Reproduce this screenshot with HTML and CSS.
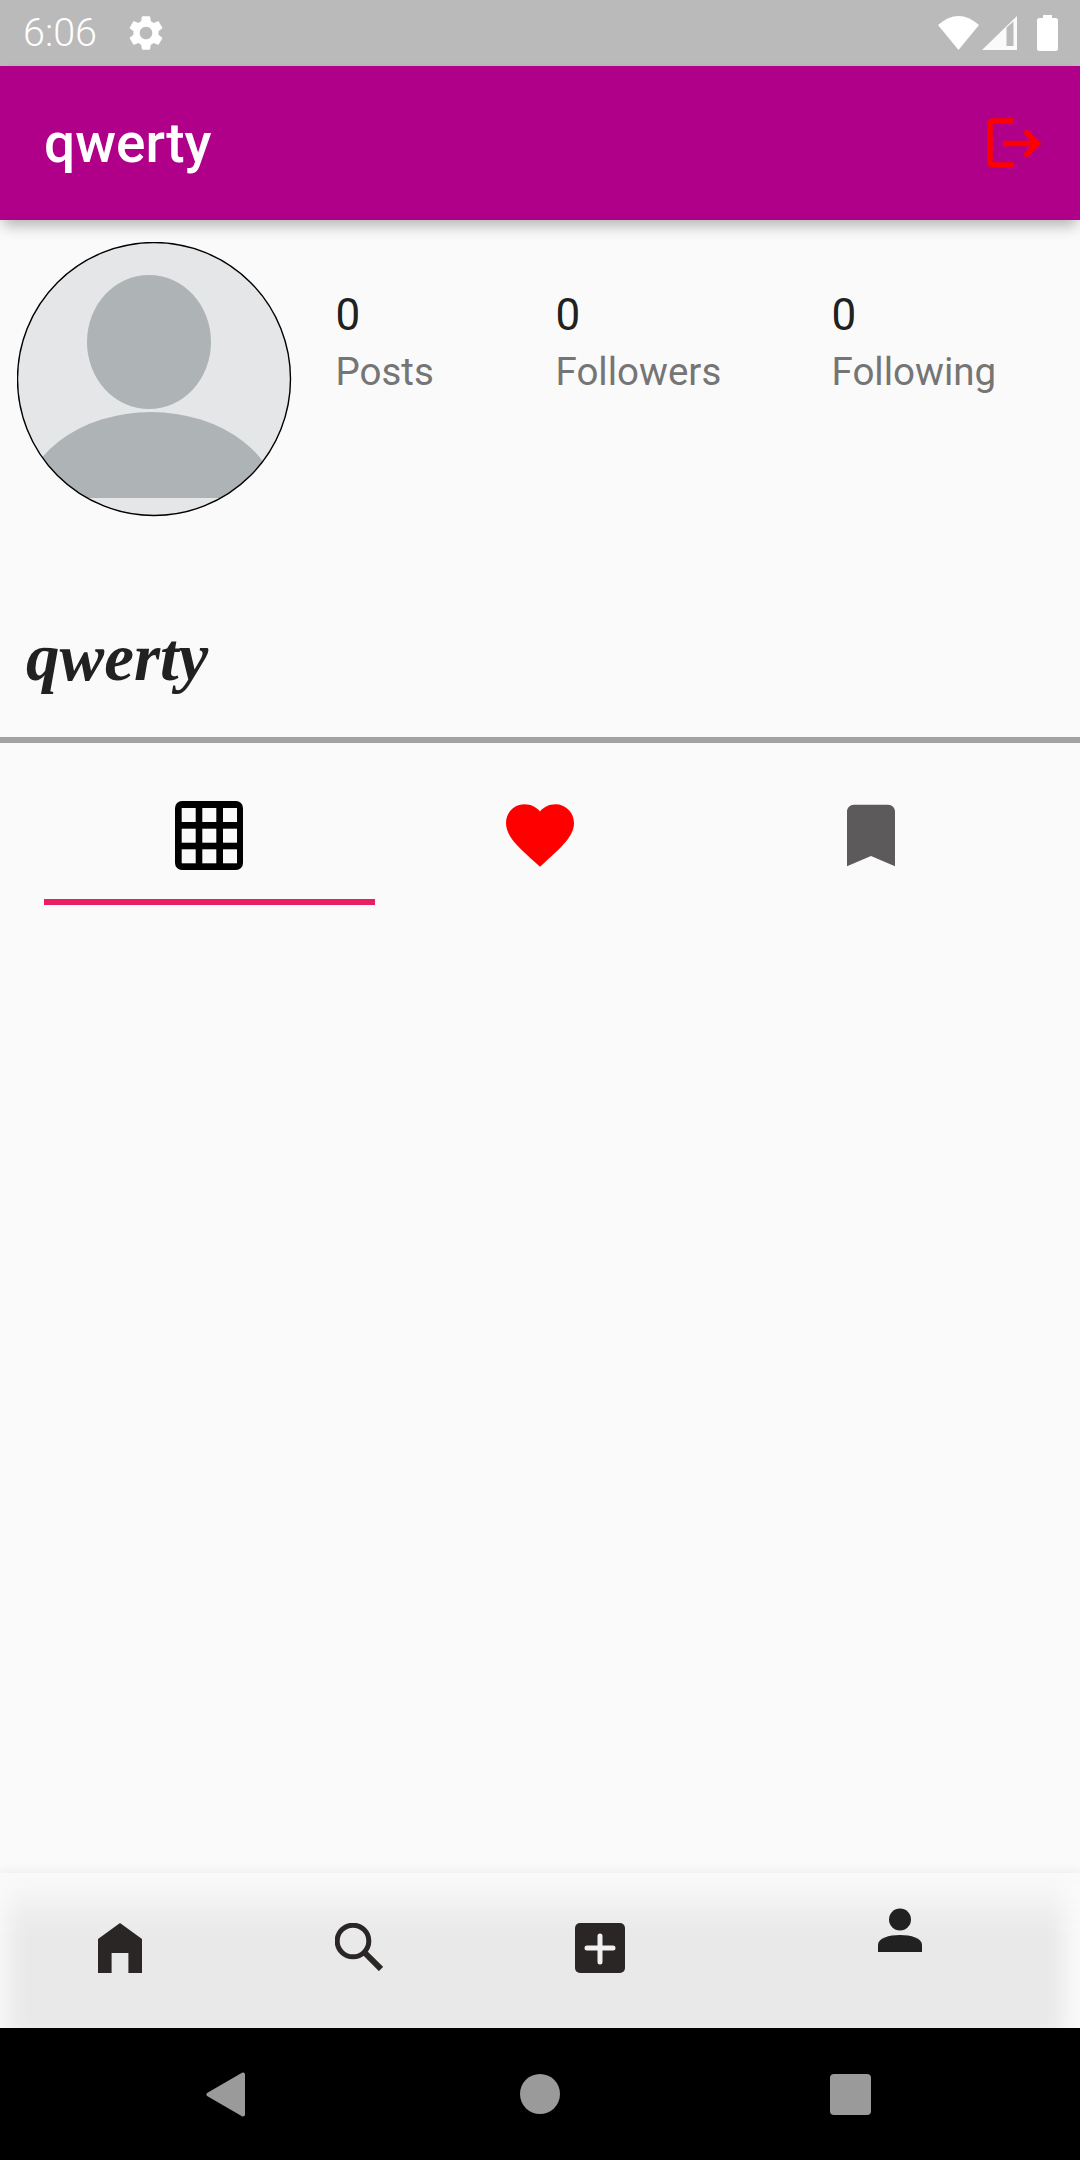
FILE: index.html
```html
<!DOCTYPE html>
<html lang="en">
<head>
<meta charset="utf-8">
<title>qwerty</title>
<link rel="stylesheet" href="styles.css">
</head>
<body>
<div class="phone">
  <header class="status">
    <div class="status-left">
      <span class="time">6:06</span>
      <svg class="gear" width="42" height="42" viewBox="0 0 24 24"><path fill="#fff" d="M19.14 12.94c.04-.3.06-.61.06-.94 0-.32-.02-.64-.07-.94l2.03-1.58c.18-.14.23-.41.12-.61l-1.92-3.32c-.12-.22-.37-.29-.59-.22l-2.39.96c-.5-.38-1.03-.7-1.62-.94l-.36-2.54c-.04-.24-.24-.41-.48-.41h-3.84c-.24 0-.43.17-.47.41l-.36 2.54c-.59.24-1.13.57-1.62.94l-2.39-.96c-.22-.08-.47 0-.59.22L2.74 8.87c-.12.21-.08.47.12.61l2.03 1.58c-.05.3-.09.63-.09.94s.02.64.07.94l-2.03 1.58c-.18.14-.23.41-.12.61l1.92 3.32c.12.22.37.29.59.22l2.39-.96c.5.38 1.03.7 1.62.94l.36 2.54c.05.24.24.41.48.41h3.84c.24 0 .44-.17.47-.41l.36-2.54c.59-.24 1.13-.56 1.62-.94l2.39.96c.22.08.47 0 .59-.22l1.92-3.32c.12-.22.07-.47-.12-.61l-2.01-1.58zM12 15.6c-1.98 0-3.6-1.62-3.6-3.6s1.62-3.6 3.6-3.6 3.6 1.62 3.6 3.6-1.62 3.6-3.6 3.6z"/></svg>
    </div>
    <div class="status-right">
      <svg class="wifi" width="41" height="34" viewBox="0 0 41 34"><path fill="#fff" d="M20.5 34 0 9Q20.5-9 41 9Z"/></svg>
      <svg class="signal" width="35" height="34" viewBox="0 0 35 34"><path fill="#fff" fill-rule="evenodd" opacity=".92" d="M0 34 35 0V34ZM24.500 30H31.500V5.500L24.500 11.500Z"/></svg>
      <svg class="battery" width="21" height="36" viewBox="0 0 21 36"><path fill="#fff" d="M6 0H15V3H18.500A2.500 2.500 0 0 1 21 5.500V33.500A2.500 2.500 0 0 1 18.500 36H2.500A2.500 2.500 0 0 1 0 33.500V5.500A2.500 2.500 0 0 1 2.500 3H6Z"/></svg>
    </div>
  </header>

  <div class="appbar">
    <h1 class="appbar-title">qwerty</h1>
    <svg class="logout" width="56" height="52" viewBox="0 0 56 52"><path fill="none" stroke="#f00" stroke-width="5.500" d="M27 3H6Q3 3 3 6V44Q3 47 6 47H27"/><path fill="none" stroke="#f00" stroke-width="5.500" d="M16 25.500H50M38 13 50.500 25.500 38 38"/></svg>
  </div>

  <main class="content">
    <section class="profile">
      <svg class="avatar" width="276" height="276" viewBox="0 0 276 276">
        <defs>
          <clipPath id="disc"><circle cx="137" cy="137" r="137"/></clipPath>
          <clipPath id="cut"><rect x="0" y="0" width="276" height="256"/></clipPath>
        </defs>
        <circle cx="137" cy="137" r="137" fill="#e4e6e8"/>
        <ellipse cx="132" cy="100" rx="62" ry="67" fill="#aeb3b6"/>
        <g clip-path="url(#disc)"><ellipse clip-path="url(#cut)" cx="134" cy="270" rx="130" ry="100" fill="#aeb3b6"/></g>
        <circle cx="137" cy="137" r="136.500" fill="none" stroke="#000" stroke-width="1.400"/>
      </svg>
      <div class="stats">
        <div class="stat"><span class="stat-num">0</span><span class="stat-label">Posts</span></div>
        <div class="stat"><span class="stat-num">0</span><span class="stat-label">Followers</span></div>
        <div class="stat"><span class="stat-num">0</span><span class="stat-label">Following</span></div>
      </div>
    </section>

    <h2 class="name">qwerty</h2>

    <div class="tabs">
      <div class="tab tab-active">
        <svg width="68" height="69" viewBox="0 0 68 69"><rect width="68" height="69" rx="7" fill="#000"/><g fill="#fafafa"><rect x="6.700" y="7" width="14" height="14"/><rect x="27.300" y="7" width="14" height="14"/><rect x="48" y="7" width="14" height="14"/><rect x="6.700" y="27.700" width="14" height="14"/><rect x="27.300" y="27.700" width="14" height="14"/><rect x="48" y="27.700" width="14" height="14"/><rect x="6.700" y="48.300" width="14" height="14"/><rect x="27.300" y="48.300" width="14" height="14"/><rect x="48" y="48.300" width="14" height="14"/></g></svg>
      </div>
      <div class="tab">
        <svg width="68" height="63" viewBox="2 3 20 18.350"><path fill="#f00" d="M12 21.350l-1.450-1.320C5.400 15.360 2 12.280 2 8.500 2 5.420 4.420 3 7.500 3c1.740 0 3.410.81 4.500 2.090C13.090 3.810 14.760 3 16.500 3 19.580 3 22 5.420 22 8.500c0 3.780-3.400 6.860-8.550 11.540L12 21.350z"/></svg>
      </div>
      <div class="tab">
        <svg width="48" height="63" viewBox="5 3 14 18"><path fill="#5c5a5a" d="M17 3H7c-1.100 0-2 .9-2 2v16l7-3 7 3V5c0-1.100-.9-2-2-2z"/></svg>
      </div>
    </div>
  </main>

  <nav class="bottom">
    <svg class="nav-home" width="44" height="50" viewBox="0 0 44 50"><path fill="#2a2626" d="M22 0 44 16V50H30.400V30H13.600V50H0V16Z"/></svg>
    <svg class="nav-search" width="48" height="48" viewBox="0 0 48 48"><circle cx="18" cy="18" r="15.800" fill="none" stroke="#2a2626" stroke-width="5"/><path stroke="#2a2626" stroke-width="6" d="M30 30 46 46"/></svg>
    <svg class="nav-add" width="50" height="50" viewBox="0 0 50 50"><rect width="50" height="50" rx="5" fill="#2a2626"/><path stroke="#f0f0f0" stroke-width="5" stroke-linecap="round" d="M25 13V39M12 25H38"/></svg>
    <svg class="nav-person" width="44" height="44" viewBox="0 0 44 44"><circle cx="22" cy="11.500" r="11" fill="#212121"/><path fill="#212121" d="M0 44V37C0 30 11 27 22 27S44 30 44 37V44Z"/></svg>
  </nav>

  <footer class="sysnav">
    <svg width="39" height="45" viewBox="0 0 39 45"><path fill="#9a9a9a" stroke="#9a9a9a" stroke-width="4" stroke-linejoin="round" d="M2.500 22.500 37 2.500V42.500Z"/></svg>
    <span class="sys-circle"></span>
    <span class="sys-square"></span>
  </footer>
</div>
</body>
</html>
```
FILE: styles.css
```css
* { box-sizing: border-box; }
html, body { margin: 0; padding: 0; }
body { font-family: Roboto, "Liberation Sans", sans-serif; background: #fafafa; }

.phone {
  width: 1080px;
  height: 2160px;
  display: flex;
  flex-direction: column;
  overflow: hidden;
  background: #fafafa;
}

.status {
  height: 66px;
  flex: none;
  background: #bababa;
  display: flex;
  justify-content: space-between;
  align-items: center;
  padding: 0 22px 0 23px;
}
.status-left { display: flex; align-items: center; }
.time { font-size: 39.5px; line-height: 66px; color: #fff; font-weight: 300; width: 102px; }
.gear { display: block; }
.status-right { display: flex; align-items: center; }
.wifi { display: block; }
.signal { display: block; margin-left: 3px; }
.battery { display: block; margin-left: 20px; }

.appbar {
  height: 154px;
  flex: none;
  background: #b0008a;
  display: flex;
  justify-content: space-between;
  align-items: center;
  padding: 0 37px 0 44px;
  position: relative;
  z-index: 2;
  box-shadow: 0 8px 14px -3px rgba(0, 0, 0, .3);
}
.appbar-title { margin: 0; font-size: 55px; line-height: 64px; font-weight: 500; color: #fff; }
.logout { display: block; margin-top: 2px; }

.content { flex: 1; display: flex; flex-direction: column; }

.profile { display: flex; align-items: flex-start; padding: 22px 0 0 17px; }
.avatar { display: block; flex: none; }
.stats {
  display: grid;
  grid-template-columns: 220px 276px 1fr;
  flex: 1;
  margin-left: 42.500px;
  padding-top: 47px;
}
.stat { display: flex; flex-direction: column; }
.stat-num { font-size: 44px; line-height: 52px; color: #212121; margin-bottom: 8px; }
.stat-label { font-size: 38.5px; line-height: 45px; color: #757575; }

.name {
  margin: 99px 0 0 26px;
  font-family: "Liberation Serif", serif;
  font-style: italic;
  font-weight: 700;
  font-size: 67px;
  line-height: 80px;
  color: #212121;
}

.tabs {
  margin-top: 40px;
  border-top: 6px solid #a2a2a2;
  display: grid;
  grid-template-columns: repeat(3, 1fr);
  padding: 0 44px;
}
.tab {
  height: 162px;
  padding-top: 58px;
  display: flex;
  justify-content: center;
  align-items: flex-start;
  border-bottom: 6px solid transparent;
}
.tab svg { display: block; margin-top: 3px; }
.tab-active { border-bottom-color: #e91e63; }
.tab-active svg { margin-top: 0; }

.bottom {
  height: 155px;
  flex: none;
  background: #e9e9e9;
  box-shadow: inset 0 64px 40px -34px #fafafa, inset 22px 0 20px -12px #f8f8f8, inset -28px 0 20px -12px #fafafa, 0 -4px 8px rgba(0, 0, 0, .04);
  display: flex;
  align-items: flex-start;
  padding: 50px 0 0 98px;
  position: relative;
}
.bottom svg { display: block; flex: none; }
.nav-search { margin-left: 193px; }
.nav-add { margin-left: 192px; }
.nav-person { margin: -15px 0 0 253px; }

.sysnav {
  height: 132px;
  flex: none;
  background: #000;
  display: flex;
  align-items: flex-start;
  padding: 44px 0 0 206px;
}
.sysnav svg { display: block; flex: none; }
.sys-circle { width: 40px; height: 40px; border-radius: 50%; background: #9a9a9a; margin: 2px 0 0 275px; }
.sys-square { width: 41px; height: 41px; border-radius: 4px; background: #9a9a9a; margin: 2px 0 0 270px; }
```
